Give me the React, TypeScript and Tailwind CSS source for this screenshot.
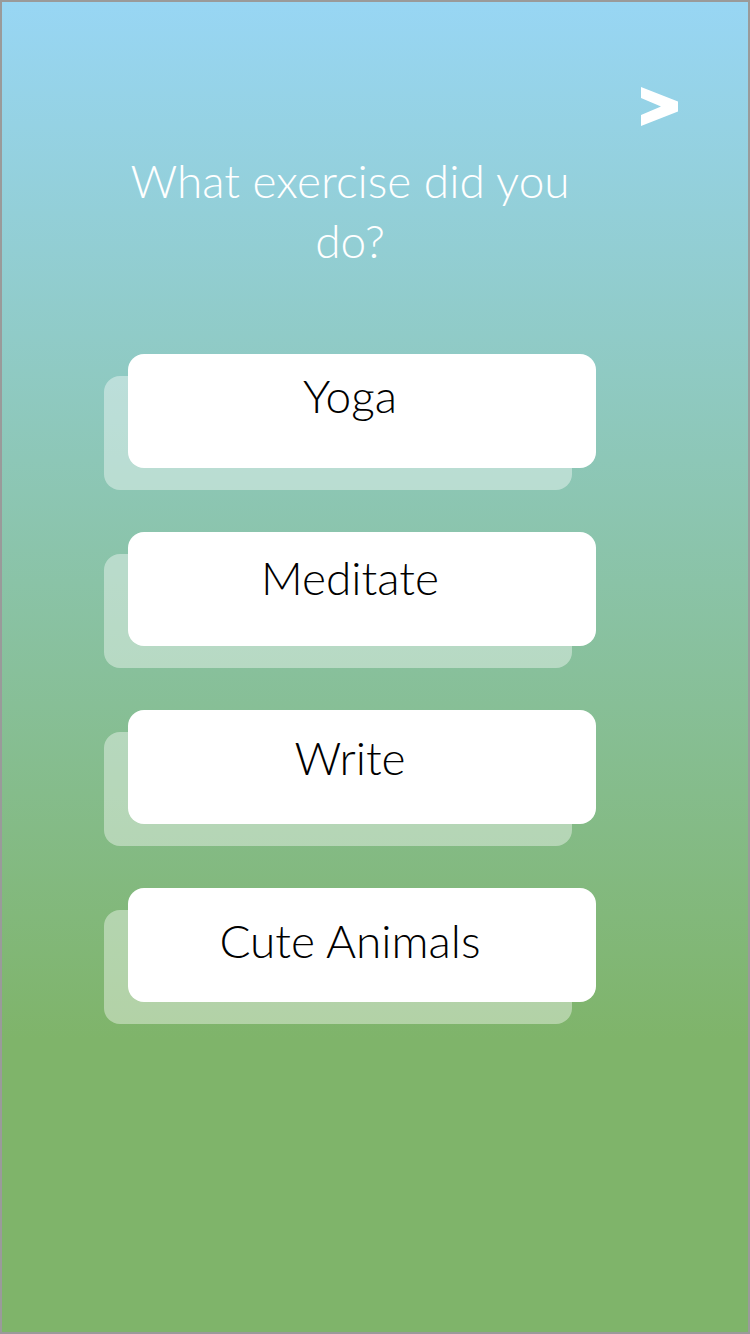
import React from 'react';

const options = [
  { label: 'Yoga', pad: 'pt-[19px]' },
  { label: 'Meditate', pad: 'pt-[23px]' },
  { label: 'Write', pad: 'pt-[25px]' },
  { label: 'Cute Animals', pad: 'pt-[30px]' },
];

export default function App() {
  return (
    <div
      className="w-[750px] h-[1334px] border-2 border-[#9a9a9a] bg-[linear-gradient(180deg,#98d6f4_0%,#7fb46a_78%,#7fb46a_100%)]"
      style={{ fontFamily: 'Lato, "Noto Sans", sans-serif' }}
    >
      <div className="flex justify-end pt-[85px] pr-[70px]">
        <svg width="37" height="39" viewBox="0 0 37 39" aria-label="Next">
          <polygon points="0,0 37,14.5 37,24.5 0,39 0,28 20,19.5 0,11" fill="#ffffff" />
        </svg>
      </div>

      <div className="ml-[102px] w-[492px]">
        <h1 className="mt-[25px] text-center text-white font-light text-[46px] leading-[60px]">
          What exercise did you
          <br />
          do?
        </h1>

        <div className="mt-[83px] flex flex-col gap-[64px]">
          {options.map((opt) => (
            <div key={opt.label} className="relative h-[114px]">
              <div className="absolute left-0 top-[22px] w-[468px] h-[114px] rounded-[16px] bg-white/40" />
              <button
                className={`relative ml-[24px] w-[468px] h-[114px] rounded-[16px] bg-white flex justify-center items-start pr-[24px] ${opt.pad}`}
              >
                <span className="text-black font-light text-[46px] leading-[46px]">{opt.label}</span>
              </button>
            </div>
          ))}
        </div>
      </div>
    </div>
  );
}
